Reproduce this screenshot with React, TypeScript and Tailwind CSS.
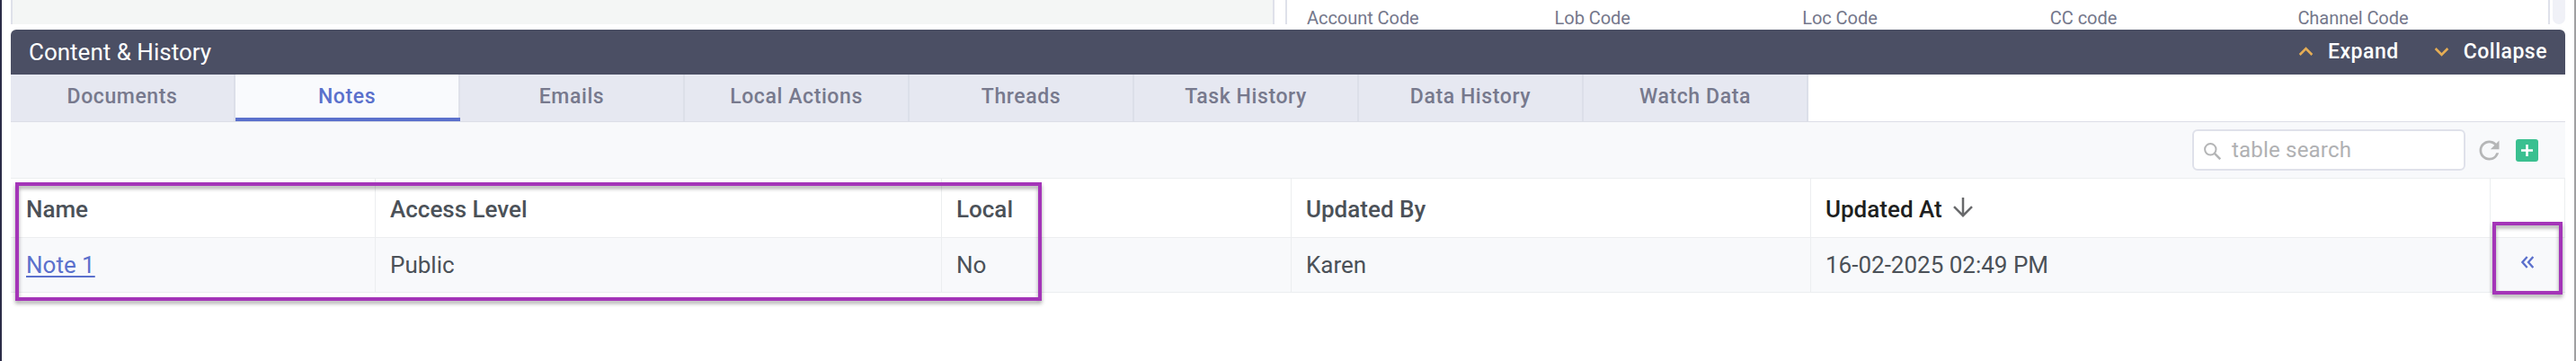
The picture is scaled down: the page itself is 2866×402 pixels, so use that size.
import { MdExpandLess, MdExpandMore, MdRefresh } from 'react-icons/md';

const codes = ['Account Code', 'Lob Code', 'Loc Code', 'CC code', 'Channel Code'];

const tabs = ['Documents', 'Notes', 'Emails', 'Local Actions', 'Threads', 'Task History', 'Data History', 'Watch Data'];

function TopStrip() {
  return (
    <div className="flex h-[27px]">
      <div className="w-[1406px] border-x-2 border-[#dfe1ea] bg-[#f4f6f5]" />
      <div className="ml-3 flex w-[1407px] border-x-2 border-[#dfe1ea] bg-white pl-[22px] pt-[13px]">
        {codes.map((code) => (
          <div key={code} className="w-[275.6px] shrink-0 text-[20px] leading-[14px] tracking-[-0.05px] text-[#74778b]">
            {code}
          </div>
        ))}
      </div>
      <div className="ml-[3px] w-[14px] rounded-b-full bg-[#f0f1f7]" />
    </div>
  );
}

function PanelHeader() {
  return (
    <div className="mt-1.5 flex h-[50px] items-center rounded-t-[6px] bg-[#4b4f64] pl-5 pr-5 text-white">
      <h2 className="grow text-[26px] leading-[50px]">Content &amp; History</h2>
      <button className="flex items-center text-[23px] font-medium leading-[50px] tracking-[0.5px]">
        <MdExpandLess className="mb-0.5 mr-[9px] size-[31px] text-[#e5ad55]" />
        Expand
      </button>
      <button className="ml-8 flex items-center text-[23px] font-medium leading-[50px] tracking-[0.5px]">
        <MdExpandMore className="mb-0.5 mr-[9px] size-[31px] text-[#e5ad55]" />
        Collapse
      </button>
    </div>
  );
}

function Tabs() {
  return (
    <div className="flex h-[53px] border-b border-[#dcdee7]">
      {tabs.map((tab) =>
        tab === 'Notes' ? (
          <div
            key={tab}
            className="w-[250px] border-b-4 border-[#5b70cc] bg-[#f9fafd] pr-0.5 text-center text-[23px] font-medium leading-[49px] tracking-[0.6px] text-[#5b70cc] shadow-[inset_-2px_0_0_#dfe1ea]"
          >
            {tab}
          </div>
        ) : (
          <div
            key={tab}
            className="w-[250px] border-r-2 border-[#dcdfe9] bg-[#e6e8f1] text-center text-[23px] font-medium leading-[49px] tracking-[0.6px] text-[#77798d]"
          >
            {tab}
          </div>
        ),
      )}
    </div>
  );
}

function Toolbar() {
  return (
    <div className="flex h-[63px] items-center justify-end border-b border-[#eceef0] bg-[#f8f9fb] pr-[30px]">
      <div className="flex h-[46px] w-[304px] items-center rounded-[6px] border-2 border-[#dfe1ea] bg-white pl-[11px] text-[24px] leading-[42px] tracking-[0.2px] text-[#b0b1b3]">
        <svg className="mr-[12px] mt-[3px] size-[19px]" viewBox="0 0 19 19" fill="none" stroke="#b4b5b6" strokeWidth="2">
          <circle cx="7.3" cy="7.3" r="6.2" />
          <path d="M11.7 11.7 18.2 18.2" strokeWidth="2.6" />
        </svg>
        table search
      </div>
      <MdRefresh className="ml-[10px] size-[33px] text-[#b5b6b7]" />
      <div className="ml-[13px] flex size-[25px] items-center justify-center rounded-[3px] bg-[#3ac090]">
        <svg className="size-[13px]" viewBox="0 0 13 13" stroke="white" strokeWidth="2.6">
          <path d="M0 6.5h13M6.5 0v13" />
        </svg>
      </div>
    </div>
  );
}

function NotesTable() {
  return (
    <div className="text-[26px] text-[#4b5158]">
      <div className="grid h-[66px] grid-cols-[406px_630px_389px_578px_756px_83px] border-b border-[#eceef0] font-medium leading-[69px] [&>*]:h-[65px] [&>*]:border-r [&>*]:border-[#eceef0] [&>*]:pl-4">
        <div className="pl-[17px]!">Name</div>
        <div>Access Level</div>
        <div className="border-r-0!">Local</div>
        <div className="-ml-px border-l">Updated By</div>
        <div className="flex text-[#1e1f21]">
          Updated At
          <svg className="ml-3 mt-[21px] size-[22px]" viewBox="0 0 22 22" fill="none" stroke="#68696b" strokeWidth="2.5">
            <path d="M11 0v20M1 10.2l10 10 10-10" />
          </svg>
        </div>
        <div />
      </div>
      <div className="grid h-[61px] grid-cols-[406px_630px_389px_578px_756px_83px] border-b border-[#eceef0] bg-[#f8f9fb] leading-[60px] [&>*]:border-r [&>*]:border-[#eceef0] [&>*]:pl-4">
        <div className="pl-[17px]!">
          <a className="text-[#5b70cc] underline decoration-2 underline-offset-[3px]">Note 1</a>
        </div>
        <div>Public</div>
        <div className="border-r-0!">No</div>
        <div className="-ml-px border-l">Karen</div>
        <div>16-02-2025 02:49 PM</div>
        <div className="flex items-center border-r-0! pl-[34px]!">
          <svg className="mb-[7px] size-[14px]" viewBox="0 0 14 14" fill="none" stroke="#5b70cc" strokeWidth="2.3">
            <path d="M6.7 1 1.4 7l5.3 6M13.3 1 8 7l5.3 6" />
          </svg>
        </div>
      </div>
    </div>
  );
}

export default function App() {
  return (
    <div className="relative h-[402px] w-[2866px] overflow-hidden border-l-2 border-r-2 border-l-[#2b2c47] border-r-[#a0a0a2] bg-white pl-[10px] pr-[10px] font-['Roboto',sans-serif]">
      <TopStrip />
      <PanelHeader />
      <Tabs />
      <Toolbar />
      <NotesTable />
      <div className="absolute left-[15px] top-[203px] h-[132px] w-[1142px] border-4 border-[#a435b8] drop-shadow-[0_3px_2px_rgba(0,0,0,0.35)]" />
      <div className="absolute left-[2771px] top-[247px] h-[81px] w-[78px] border-4 border-[#a435b8] drop-shadow-[0_3px_2px_rgba(0,0,0,0.35)]" />
    </div>
  );
}
